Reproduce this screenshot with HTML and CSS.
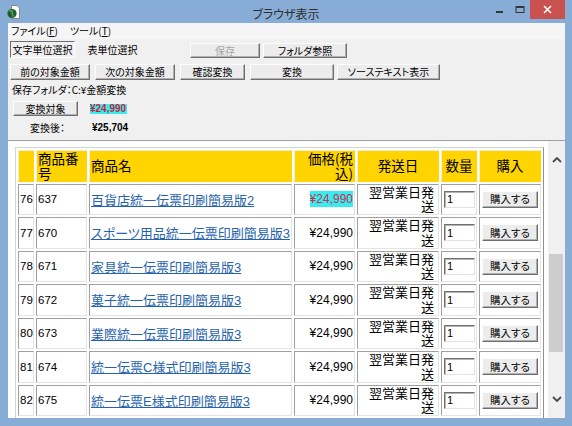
FILE: index.html
```html
<!DOCTYPE html>
<html lang="ja">
<head>
<meta charset="utf-8">
<title>ブラウザ表示</title>
<link rel="stylesheet" href="styles.css">
</head>
<body>
<div class="window">
  <header class="titlebar">
    <div class="tb-left">
      <svg class="app-icon" width="13" height="14" viewBox="0 0 13 14">
        <path d="M4.5 0.5h5.5l2.5 2.5v10.5h-8z" fill="#fafafa" stroke="#8a8a8a"/>
        <circle cx="5" cy="8.5" r="4.6" fill="#1d5e34"/>
        <path d="M2.3 6.3c1.2-1 2.6-0.6 3 0.3s-0.8 1.6 0 2.5 1.5 1.4 0.5 2.8" fill="none" stroke="#5cae52" stroke-width="1.3"/>
      </svg>
    </div>
    <div class="title">ブラウザ表示</div>
    <div class="controls">
      <span class="ctl"><svg width="10" height="10" viewBox="0 0 10 10"><rect x="1" y="6" width="7" height="2" fill="#333"/></svg></span>
      <span class="ctl"><svg width="10" height="10" viewBox="0 0 10 10"><rect x="1" y="1.5" width="8" height="6" fill="none" stroke="#333" stroke-width="1"/><rect x="1" y="1" width="8" height="2" fill="#333"/></svg></span>
      <span class="ctl close"><svg width="9" height="9" viewBox="0 0 9 9"><path d="M1 1l7 7M8 1l-7 7" stroke="#fff" stroke-width="1.6"/></svg></span>
    </div>
  </header>

  <div class="client">
    <nav class="menubar">
      <span>ファイル(<u>F</u>)</span>
      <span>ツール(<u>T</u>)</span>
    </nav>

    <div class="toolbar">
      <div class="row row1">
        <span class="tab tab-active">文字単位選択</span>
        <span class="tab">表単位選択</span>
        <button class="btn btn-small w-save" disabled>保存</button>
        <button class="btn btn-small w-folder">フォルダ参照</button>
      </div>
      <div class="row row2">
        <button class="btn w-prev">前の対象金額</button>
        <button class="btn w-next">次の対象金額</button>
        <button class="btn w-confirm">確認変換</button>
        <button class="btn w-convert">変換</button>
        <button class="btn w-source">ソーステキスト表示</button>
      </div>
      <div class="folder">保存フォルダ：C:¥金額変換</div>
      <div class="row conv">
        <button class="btn btn-small w-target">変換対象</button>
        <span class="amount amount-hit">¥24,990</span>
      </div>
      <div class="row after">
        <span class="after-label">変換後：</span>
        <span class="amount">¥25,704</span>
      </div>
    </div>

    <div class="browser">
      <div class="page">
        <table class="items">
          <thead>
            <tr>
              <th class="c-idx"></th>
              <th class="c-code">商品番号</th>
              <th class="c-name">商品名</th>
              <th class="c-price">価格(税込)</th>
              <th class="c-ship">発送日</th>
              <th class="c-qty">数量</th>
              <th class="c-buy">購入</th>
            </tr>
          </thead>
          <tbody>
            <tr>
              <td class="idx">76</td><td class="code">637</td>
              <td class="name"><a href="#">百貨店統一伝票印刷簡易版2</a></td>
              <td class="price"><span class="price-hit">¥24,990</span></td>
              <td class="ship">翌営業日発送</td>
              <td class="qty"><input class="qty-input" type="text" value="1"></td>
              <td class="buy"><button class="buy-btn">購入する</button></td>
            </tr>
            <tr>
              <td class="idx">77</td><td class="code">670</td>
              <td class="name"><a href="#">スポーツ用品統一伝票印刷簡易版3</a></td>
              <td class="price">¥24,990</td>
              <td class="ship">翌営業日発送</td>
              <td class="qty"><input class="qty-input" type="text" value="1"></td>
              <td class="buy"><button class="buy-btn">購入する</button></td>
            </tr>
            <tr>
              <td class="idx">78</td><td class="code">671</td>
              <td class="name"><a href="#">家具統一伝票印刷簡易版3</a></td>
              <td class="price">¥24,990</td>
              <td class="ship">翌営業日発送</td>
              <td class="qty"><input class="qty-input" type="text" value="1"></td>
              <td class="buy"><button class="buy-btn">購入する</button></td>
            </tr>
            <tr>
              <td class="idx">79</td><td class="code">672</td>
              <td class="name"><a href="#">菓子統一伝票印刷簡易版3</a></td>
              <td class="price">¥24,990</td>
              <td class="ship">翌営業日発送</td>
              <td class="qty"><input class="qty-input" type="text" value="1"></td>
              <td class="buy"><button class="buy-btn">購入する</button></td>
            </tr>
            <tr>
              <td class="idx">80</td><td class="code">673</td>
              <td class="name"><a href="#">業際統一伝票印刷簡易版3</a></td>
              <td class="price">¥24,990</td>
              <td class="ship">翌営業日発送</td>
              <td class="qty"><input class="qty-input" type="text" value="1"></td>
              <td class="buy"><button class="buy-btn">購入する</button></td>
            </tr>
            <tr>
              <td class="idx">81</td><td class="code">674</td>
              <td class="name"><a href="#">統一伝票C様式印刷簡易版3</a></td>
              <td class="price">¥24,990</td>
              <td class="ship">翌営業日発送</td>
              <td class="qty"><input class="qty-input" type="text" value="1"></td>
              <td class="buy"><button class="buy-btn">購入する</button></td>
            </tr>
            <tr>
              <td class="idx">82</td><td class="code">675</td>
              <td class="name"><a href="#">統一伝票E様式印刷簡易版3</a></td>
              <td class="price">¥24,990</td>
              <td class="ship">翌営業日発送</td>
              <td class="qty"><input class="qty-input" type="text" value="1"></td>
              <td class="buy"><button class="buy-btn">購入する</button></td>
            </tr>
          </tbody>
        </table>
      </div>
      <div class="scrollbar">
        <div class="sb-arrow"><svg width="10" height="6" viewBox="0 0 10 6"><path d="M1 5l4-4 4 4" fill="none" stroke="#4a4a4a" stroke-width="1.8"/></svg></div>
        <div class="sb-track"><div class="sb-thumb"></div></div>
        <div class="sb-arrow"><svg width="10" height="6" viewBox="0 0 10 6"><path d="M1 1l4 4 4-4" fill="none" stroke="#4a4a4a" stroke-width="1.8"/></svg></div>
      </div>
    </div>
  </div>
</div>
</body>
</html>
```

FILE: styles.css
```css
* { box-sizing: border-box; }
html, body { margin: 0; padding: 0; }
body {
  width: 572px;
  height: 426px;
  overflow: hidden;
  background: #87add7;
  font-family: "Liberation Sans", "Noto Sans CJK JP", sans-serif;
  color: #000;
}
.window { width: 572px; height: 426px; display: flex; flex-direction: column; }

/* title bar */
.titlebar { height: 23px; flex: none; display: grid; grid-template-columns: 1fr auto 1fr; }
.tb-left { display: flex; align-items: flex-start; padding: 5px 0 0 7px; }
.title {
  font-family: "Noto Sans CJK JP", sans-serif;
  font-size: 12px; line-height: 14px; padding-top: 7px;
  color: #2e2e2e; font-feature-settings: "palt" 1;
}
.controls { justify-self: end; display: flex; margin-right: 7px; height: 19px; }
.ctl { width: 20px; height: 19px; display: flex; align-items: center; justify-content: center; }
.ctl.close { width: 35px; background: #c9514f; }

/* client */
.client {
  flex: 1; min-height: 0;
  margin: 0 7px 8px 8px;
  background: #f0f0f0;
  display: flex; flex-direction: column;
}
.menubar {
  height: 16px; flex: none;
  display: flex; align-items: center; gap: 12px;
  padding-left: 3px;
  font-family: "Noto Sans CJK JP", sans-serif;
  font-size: 10px; line-height: 12px;
  font-feature-settings: "palt" 1;
  background: #f5f5f5;
}
.menubar u { text-underline-offset: 1px; }

.toolbar {
  height: 101px; flex: none;
  padding-left: 2px;
  display: flex; flex-direction: column;
  font-family: "Noto Sans CJK JP", sans-serif;
  font-size: 10px; line-height: 12px;
  font-feature-settings: "palt" 1;
}
.row { display: flex; flex: none; }
.row1 { margin-top: 1px; height: 18px; align-items: flex-end; }
.row2 { margin-top: 6px; height: 16px; gap: 5px; }
.folder { margin-top: 4px; height: 12px; padding-left: 2px; }
.conv { margin-top: 5px; height: 15px; align-items: center; padding-left: 3px; }
.after { margin-top: 5px; height: 13px; align-items: center; padding-left: 20px; }

.tab { width: 65px; height: 17px; display: flex; align-items: center; justify-content: center; border: 1px solid transparent; }
.tab-active { border-color: #6e6e6e #fff #fff #6e6e6e; }
.tab + .tab { margin-left: 5px; }

.btn {
  font: inherit;
  padding: 0; margin: 0;
  height: 16px;
  background: #ececec;
  color: #000;
  border: 1px solid;
  border-color: #fdfdfd #6e6e6e #6e6e6e #fdfdfd;
  box-shadow: inset -1px -1px 0 #b0b0b0;
}
.btn:disabled { color: #a4a4a4; }
.btn-small { height: 15px; }
.w-save { width: 70px; margin-left: 45px; }
.w-folder { width: 84px; margin-left: 3px; }
.w-prev { width: 80px; }
.w-next { width: 80px; }
.w-confirm { width: 65px; }
.w-convert { width: 84px; }
.w-source { width: 103px; margin-left: -2px; }
.w-target { width: 65px; }

.amount {
  font-family: "Liberation Sans", sans-serif;
  font-weight: bold; font-size: 10px; line-height: 10px;
}
.amount-hit { margin-left: 12px; background: #35ecf0; color: #cf1f3c; padding: 0 1px 0 0; height: 10px; }
.after-label { width: 62px; }

/* browser area */
.browser { flex: 1; min-height: 0; display: flex; border-top: 1px solid #9f9f9f; }
.page { flex: 1; min-width: 0; background: #fff; overflow: hidden; padding: 6px 0 0 7px; }

.items {
  border-collapse: separate;
  border-spacing: 2px;
  border: 1px solid;
  border-color: #d4d4d4 #909090 #909090 #d4d4d4;
  table-layout: fixed;
  width: 529px;
}
.items tr { height: 31.5px; }
.items th, .items td {
  box-sizing: border-box;
  padding: 0 1px;
  border: 1px solid;
  vertical-align: middle;
}
.items td { border-color: #a0a0a0 #e4e4e4 #e4e4e4 #a0a0a0; background: #fff; }
.items th {
  background: #ffd400;
  border-color: #f4eed2 #ffd400 #ffd400 #f4eed2;
  font-family: "Noto Sans CJK JP", sans-serif;
  font-weight: normal; font-size: 13.5px; line-height: 14.75px;
}
.c-idx { width: 16px; }
.c-code { width: 51px; text-align: left; }
.c-name { width: 203px; text-align: left; }
.c-price { width: 61px; text-align: right; }
.c-ship { width: 82px; text-align: center; }
.c-qty { width: 36px; text-align: center; }
.c-buy { width: 62px; text-align: center; }

.idx, .code { font-size: 11.5px; }
.name { font-size: 13px; font-feature-settings: "palt" 1; white-space: nowrap; }
.name a { color: #2763ad; text-decoration: underline; text-underline-offset: 1px; }
.price { text-align: right; font-size: 12px; }
.price-hit { background: #35ecf0; color: #d42a4c; padding: 1px 0; }
.items td.ship {
  text-align: right;
  font-family: "Noto Sans CJK JP", sans-serif;
  font-size: 13px; line-height: 14.75px;
  padding-right: 4px;
}
.qty-input {
  display: block;
  width: 31px; height: 17px;
  margin: 0 0 0 1px; padding: 0 2px;
  border: 1px solid;
  border-color: #707070 #e2e2e2 #e2e2e2 #707070;
  box-shadow: inset 1px 1px 0 #b4b4b4;
  font-family: "Liberation Sans", sans-serif; font-size: 11px;
  background: #fff;
}
.buy-btn {
  display: block;
  width: 56px; height: 17px;
  margin: 0 0 0 1px; padding: 0;
  background: #ececec;
  border: 1px solid;
  border-color: #fdfdfd #6e6e6e #6e6e6e #fdfdfd;
  box-shadow: inset -1px -1px 0 #b0b0b0;
  font-family: "Noto Sans CJK JP", sans-serif;
  font-size: 10.5px; line-height: 12px;
  font-feature-settings: "palt" 1;
  color: #000;
}

/* scrollbar */
.scrollbar { width: 17px; flex: none; background: #f0f0f0; display: flex; flex-direction: column; }
.sb-arrow { height: 38px; flex: none; display: flex; align-items: center; justify-content: center; }
.sb-track { flex: 1; display: flex; flex-direction: column; }
.sb-thumb { margin: 75px 2px 0 1px; height: 98px; background: #cdcdcd; }
```
